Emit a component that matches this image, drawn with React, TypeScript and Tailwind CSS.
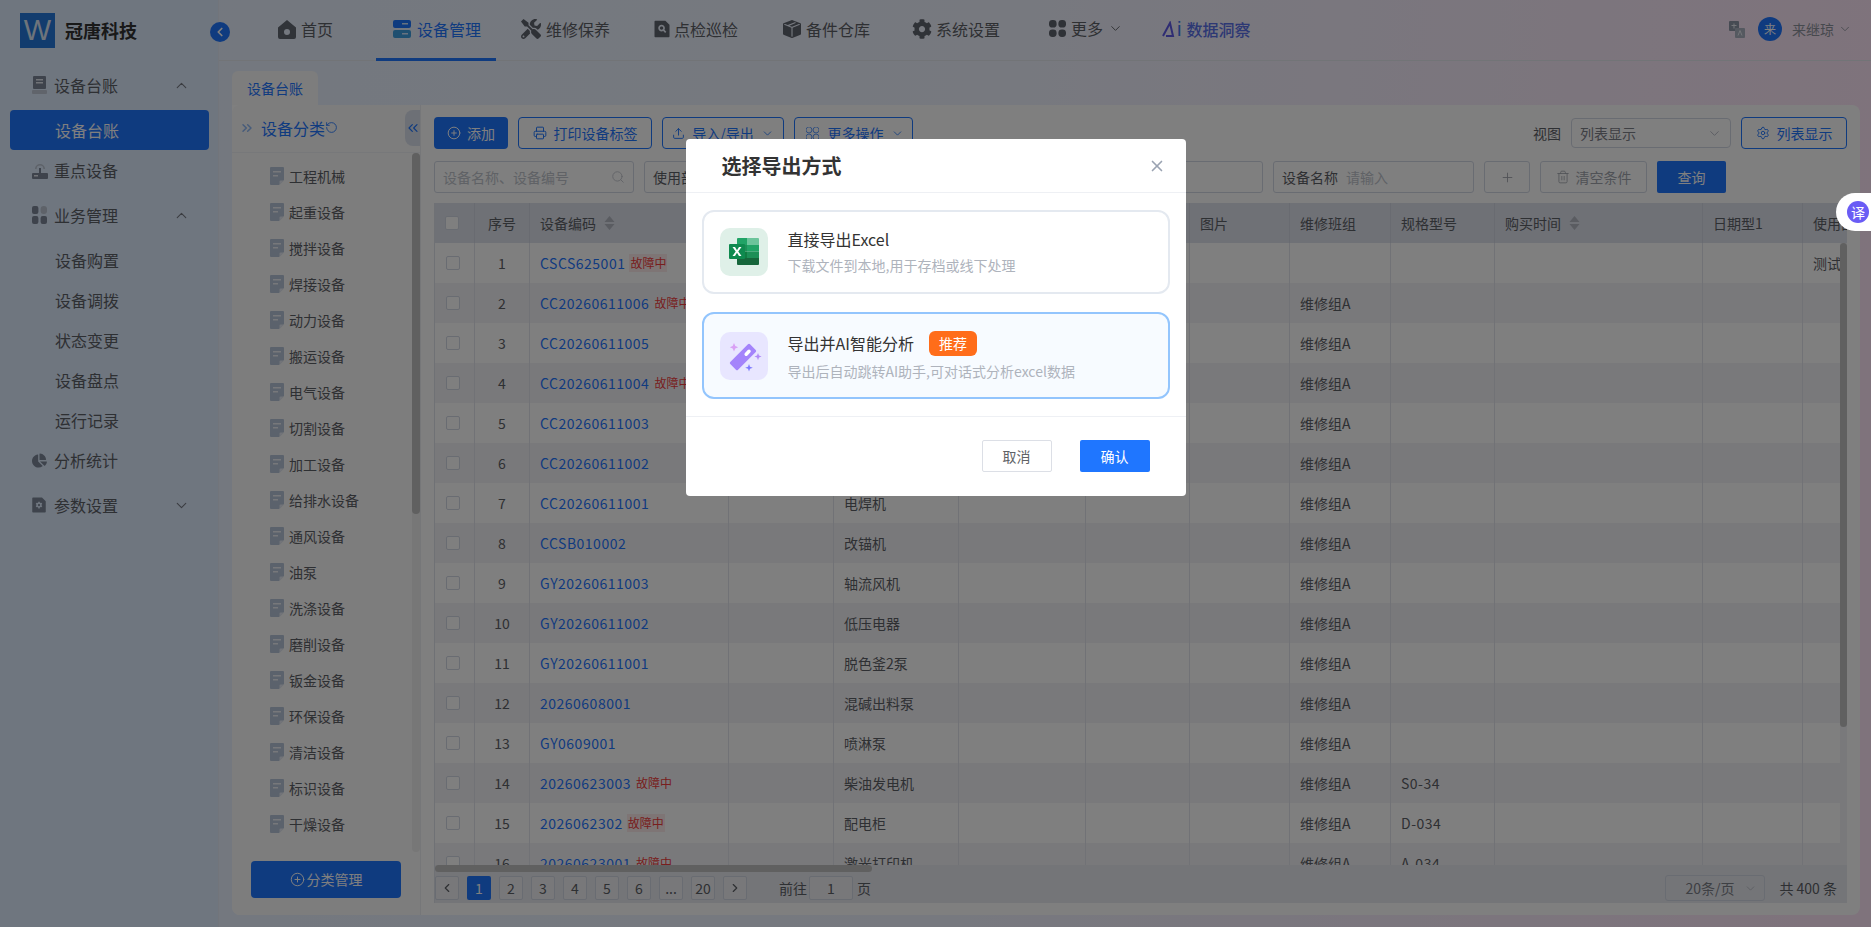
import { ChevronDown, ChevronLeft, ChevronRight, ChevronUp, ChevronsLeft, ChevronsRight, CirclePlus, Plus, Printer, RotateCw, Search, Settings, Trash2, Upload, X } from "lucide-react";
import { FaChartPie, FaCog, FaTools } from "react-icons/fa";
import { BsBoxSeamFill } from "react-icons/bs";
import { RiFileSearchFill, RiFileSettingsFill } from "react-icons/ri";

const navItems = [
  { label: "维修保养", icon: <FaTools className="size-[20px]" />, cls: "ml-[9px] pl-[16px] gap-[5px] w-[121px]" },
  { label: "点检巡检", icon: <RiFileSearchFill className="size-[20px]" />, cls: "ml-[12px] pl-[14px] gap-[2px] w-[118px]" },
  { label: "备件仓库", icon: <BsBoxSeamFill className="size-[18px]" />, cls: "ml-[11px] pl-[16px] gap-[5px] w-[119px]" },
  { label: "系统设置", icon: <FaCog className="size-[20px]" />, cls: "ml-[10px] pl-[16px] gap-[4px] w-[120px]" },
];

const categories = ["工程机械", "起重设备", "搅拌设备", "焊接设备", "动力设备", "搬运设备", "电气设备", "切割设备", "加工设备", "给排水设备", "通风设备", "油泵", "洗涤设备", "磨削设备", "钣金设备", "环保设备", "清洁设备", "标识设备", "干燥设备"];

const rows = [
  { code: "CSCS625001", fault: true, name: "", team: "", model: "", use: "测试" },
  { code: "CC20260611006", fault: true, name: "", team: "维修组A", model: "", use: "" },
  { code: "CC20260611005", fault: false, name: "", team: "维修组A", model: "", use: "" },
  { code: "CC20260611004", fault: true, name: "", team: "维修组A", model: "", use: "" },
  { code: "CC20260611003", fault: false, name: "", team: "维修组A", model: "", use: "" },
  { code: "CC20260611002", fault: false, name: "", team: "维修组A", model: "", use: "" },
  { code: "CC20260611001", fault: false, name: "电焊机", team: "维修组A", model: "", use: "" },
  { code: "CCSB010002", fault: false, name: "改锚机", team: "维修组A", model: "", use: "" },
  { code: "GY20260611003", fault: false, name: "轴流风机", team: "维修组A", model: "", use: "" },
  { code: "GY20260611002", fault: false, name: "低压电器", team: "维修组A", model: "", use: "" },
  { code: "GY20260611001", fault: false, name: "脱色釜2泵", team: "维修组A", model: "", use: "" },
  { code: "20260608001", fault: false, name: "混碱出料泵", team: "维修组A", model: "", use: "" },
  { code: "GY0609001", fault: false, name: "喷淋泵", team: "维修组A", model: "", use: "" },
  { code: "20260623003", fault: true, name: "柴油发电机", team: "维修组A", model: "S0-34", use: "" },
  { code: "2026062302", fault: true, name: "配电柜", team: "维修组A", model: "D-034", use: "" },
  { code: "20260623001", fault: true, name: "激光打印机", team: "维修组A", model: "A-034", use: "" },
];

const gridCols = "grid grid-cols-[40px_55px_199px_105px_125px_127px_104px_100px_101px_104px_208px_100px_1fr]";

const SortCaret = () => (
  <svg width="11" height="14" viewBox="0 0 11 14" className="ml-[8px] shrink-0 fill-[#b4b8c2]">
    <path d="M5.5 0 10.5 6H.5zM5.5 14 .5 8h10z" />
  </svg>
);

const DocIcon = () => (
  <svg width="14" height="18" viewBox="0 0 14 18" className="shrink-0">
    <path d="M1 0h12a1 1 0 0 1 1 1v12l-5 5H1a1 1 0 0 1-1-1V1a1 1 0 0 1 1-1z" fill="#b7c4d8" />
    <path d="M3 4h8v1.6H3zM3 8h5v1.6H3z" fill="#eef1f6" />
    <path d="M14 13.5 9.5 18v-3.5a1 1 0 0 1 1-1z" fill="#e4e9f2" />
  </svg>
);

const Petals = ({ cls }: { cls: string }) => (
  <svg width="17" height="17" viewBox="0 0 17 17" className={cls}>
    <rect x="0" y="0" width="7.6" height="7.6" rx="3.4" />
    <rect x="9.4" y="0" width="7.6" height="7.6" rx="3.4" />
    <rect x="0" y="9.4" width="7.6" height="7.6" rx="3.4" />
    <rect x="9.4" y="9.4" width="7.6" height="7.6" rx="3.4" />
  </svg>
);

const SideGroup = ({ icon, label, chevron }: { icon: React.ReactNode; label: string; chevron?: "up" | "down" }) => (
  <div className="flex h-[50px] items-center pl-[32px] pr-[28px] text-[16px] text-[#5d6066]">
    <span className="flex w-[22px] shrink-0 items-center">{icon}</span>
    <span>{label}</span>
    {chevron === "up" && <ChevronUp className="ml-auto size-[17px] text-[#777b84]" strokeWidth={1.6} />}
    {chevron === "down" && <ChevronDown className="ml-auto size-[17px] text-[#777b84]" strokeWidth={1.6} />}
  </div>
);

const SideSub = ({ label }: { label: string }) => (
  <div className="flex h-[40px] items-center pl-[55px] text-[16px] text-[#5d6066]">{label}</div>
);

const Sidebar = () => (
  <aside className="w-[219px] shrink-0 border-r border-[#e4ebf7] bg-[#deecff]">
    <div className="flex h-[60px] items-center pl-[20px]">
      <div className="flex size-[35px] items-center justify-center bg-[#2478dc] font-['Liberation_Sans',sans-serif] text-[29px] leading-none text-[#dce8f6]">W</div>
      <span className="ml-[10px] text-[18px] font-bold text-[#333]">冠唐科技</span>
    </div>
    <SideGroup
      label="设备台账"
      chevron="up"
      icon={
        <svg width="15" height="19" viewBox="0 0 15 19">
          <rect x="1" width="13" height="13" rx="1" fill="#7c8798" />
          <path d="M4 3h7v1.4H4zM4 6h7v1.4H4z" fill="#e3e8f0" />
          <rect y="14" width="15" height="4" rx="1" fill="#c1c9d6" />
        </svg>
      }
    />
    <div className="ml-[10px] mr-[9px] flex h-[40px] items-center rounded-[4px] bg-[#1f76ff] pl-[45px] text-[16px] text-white">设备台账</div>
    <div className="flex h-[40px] items-center pl-[32px] text-[16px] text-[#5d6066]">
      <span className="flex w-[22px] shrink-0 items-center">
        <svg width="16" height="19" viewBox="0 0 16 19">
          <path d="M3 8a5 5 0 0 1 10 0h-1.6a3.4 3.4 0 0 0-6.8 0z" fill="#bcc5d2" />
          <rect x="7" y="7" width="2" height="6" fill="#7c8798" />
          <rect y="12" width="16" height="6" rx="1" fill="#7c8798" />
          <rect x="2" y="14" width="4" height="1.5" fill="#e3e8f0" />
        </svg>
      </span>
      重点设备
    </div>
    <SideGroup
      label="业务管理"
      chevron="up"
      icon={
        <svg width="15" height="18" viewBox="0 0 15 18">
          <rect width="6.4" height="8" rx="2" fill="#7c8798" />
          <rect x="8.6" width="6.4" height="8" rx="3" fill="#bcc5d2" />
          <rect y="10" width="6.4" height="8" rx="2" fill="#7c8798" />
          <rect x="8.6" y="10" width="6.4" height="8" rx="2" fill="#7c8798" />
        </svg>
      }
    />
    {["设备购置", "设备调拨", "状态变更", "设备盘点", "运行记录"].map((l) => (
      <SideSub key={l} label={l} />
    ))}
    <div className="flex h-[40px] items-center pl-[32px] text-[16px] text-[#5d6066]">
      <span className="flex w-[22px] shrink-0 items-center">
        <FaChartPie className="size-[15px] text-[#7c8798]" />
      </span>
      分析统计
    </div>
    <SideGroup label="参数设置" chevron="down" icon={<RiFileSettingsFill className="size-[18px] -ml-[2px] text-[#7c8798]" />} />
  </aside>
);

const TopBar = () => (
  <header className="relative flex h-[61px] shrink-0 items-start border-b border-[#e4e8ee] text-[16px] text-[#5d6066]">
    <div className="absolute -left-[9px] top-[22px] z-10 flex size-[20px] items-center justify-center rounded-full bg-[#1f76ff] text-white">
      <ChevronLeft className="size-[14px]" strokeWidth={3} />
    </div>
    <div className="ml-[59px] flex h-[60px] w-[88px] items-center gap-[5px] pb-[2px]">
      <svg width="18" height="19" viewBox="0 0 18 19" className="shrink-0 fill-[#626873]">
        <path fillRule="evenodd" d="M9 0l9 7.5V17a2 2 0 0 1-2 2H2a2 2 0 0 1-2-2V7.5zM9 9a3 3 0 1 0 0 6 3 3 0 0 0 0-6z" />
      </svg>
      首页
    </div>
    <div className="ml-[10px] flex h-[61px] w-[120px] items-center gap-[6px] border-b-[3px] border-[#1f76ff] pl-[17px] text-[#1f76ff]">
      <svg width="18" height="18" viewBox="0 0 18 18" className="shrink-0">
        <rect width="18" height="8" rx="2" fill="#1f76ff" />
        <rect y="10" width="18" height="8" rx="2" fill="#3f9fe0" />
        <path d="M9 3h6v1.4H9zM9 13h6v1.4H9z" fill="#cfe4ff" />
      </svg>
      设备管理
    </div>
    {navItems.map((n) => (
      <div key={n.label} className={`flex h-[60px] items-center pb-[2px] ${n.cls}`}>
        <span className="flex shrink-0 text-[#5f646e]">{n.icon}</span>
        {n.label}
      </div>
    ))}
    <div className="ml-[17px] flex h-[60px] w-[105px] items-center pb-[4px] pl-[16px]">
      <Petals cls="mr-[5px] fill-[#5f646e]" />
      更多
      <ChevronDown className="ml-[5px] size-[15px]" strokeWidth={1.5} />
    </div>
    <div className="ml-[8px] flex h-[60px] items-center pb-[2px] pl-[16px] font-medium text-[#5a70e8]">
      <svg width="14" height="16" viewBox="0 0 14 16" className="mr-[1px] fill-none">
        <path d="M1 15 8 2l3 13H4" stroke="#5f5ae6" strokeWidth="2" />
      </svg>
      <span className="mr-[5px] font-['Liberation_Sans',sans-serif] text-[20px] leading-none text-[#3f78ee]">i</span>
      数据洞察
    </div>
    <div className="ml-auto flex h-[60px] items-center pb-[2px] pr-[19px] text-[14px] text-[#8d929c]">
      <svg width="16" height="17" viewBox="0 0 16 17" className="mr-[13px]">
        <rect width="10" height="10" rx="1" fill="#8d96a6" />
        <rect x="6" y="7" width="10" height="10" rx="1" fill="#aab2c0" />
        <path d="M2.5 4.5h5M5 2.5v5M9 14.5l2-5 2 5" stroke="#e8ecf2" strokeWidth="1" fill="none" />
      </svg>
      <span className="mr-[10px] flex size-[24px] items-center justify-center rounded-full bg-[#1f76ff] text-[12px] text-white">来</span>
      来继琼
      <ChevronDown className="ml-[4px] size-[14px]" strokeWidth={1.5} />
    </div>
  </header>
);

const CategoryPanel = () => (
  <div className="flex w-[189px] shrink-0 flex-col rounded-l-[8px] border-r border-[#eceef2] bg-[#fafafa]">
    <div className="relative flex h-[48px] shrink-0 items-center border-b border-[#eef0f4] pb-[2px] pl-[7px] text-[16px] text-[#1f76ff]">
      <ChevronsRight className="mr-[6px] size-[16px] text-[#8fb8f5]" strokeWidth={2.2} />
      设备分类
      <RotateCw className="size-[13px] -scale-x-100" strokeWidth={1.6} />
      <div className="absolute right-0 top-[5px] flex h-[36px] w-[15px] items-center justify-center rounded-l-[8px] bg-[#dbe1ec]">
        <ChevronsLeft className="size-[16px] shrink-0" strokeWidth={1.8} />
      </div>
    </div>
    <div className="flex min-h-0 flex-1 justify-between">
      <ul className="pl-[38px] pt-[5px] text-[14px] text-[#5d6066]">
        {categories.map((c) => (
          <li key={c} className="flex h-[36px] items-center gap-[5px]">
            <DocIcon />
            {c}
          </li>
        ))}
      </ul>
      <div className="h-[699px] w-[8px] rounded-[4px] bg-[#eeeeee]">
        <div className="h-[361px] rounded-[4px] bg-[#c0c0c0]" />
      </div>
    </div>
    <button className="mx-[19px] mb-[17px] flex h-[37px] shrink-0 items-center justify-center gap-[2px] rounded-[4px] bg-[#1f76ff] text-[14px] text-white">
      <CirclePlus className="size-[15px]" strokeWidth={1.6} />
      分类管理
    </button>
  </div>
);

const OutlineBtn = ({ children, cls }: { children: React.ReactNode; cls: string }) => (
  <button className={`flex h-[32px] items-center justify-center gap-[7px] rounded-[4px] border border-[#1f76ff] bg-white text-[14px] text-[#1f76ff] ${cls}`}>{children}</button>
);

const FilterBox = ({ label, placeholder, cls }: { label?: string; placeholder?: string; cls: string }) => (
  <div className={`flex h-[32px] items-center rounded-[3px] border border-[#d3d8e4] bg-white px-[8px] text-[14px] ${cls}`}>
    {label && <span className="mr-[8px] text-[#5d6066]">{label}</span>}
    <span className="text-[#c0c4cc]">{placeholder}</span>
  </div>
);

const Toolbar = () => (
  <>
    <div className="flex h-[32px] items-center">
      <button className="flex h-[32px] w-[74px] items-center justify-center gap-[6px] rounded-[4px] bg-[#1f76ff] text-[14px] text-white">
        <CirclePlus className="size-[14px]" strokeWidth={1.7} />
        添加
      </button>
      <OutlineBtn cls="ml-[10px] w-[134px]">
        <Printer className="size-[14px]" strokeWidth={1.7} />
        打印设备标签
      </OutlineBtn>
      <OutlineBtn cls="ml-[10px] w-[122px] gap-[4px]">
        <Upload className="size-[13px]" strokeWidth={1.7} />
        导入/导出
        <ChevronDown className="size-[13px]" strokeWidth={1.5} />
      </OutlineBtn>
      <OutlineBtn cls="ml-[10px] w-[119px] gap-[4px]">
        <Petals cls="fill-none stroke-[#1f76ff] scale-[.75]" />
        更多操作
        <ChevronDown className="size-[13px]" strokeWidth={1.5} />
      </OutlineBtn>
      <span className="ml-auto text-[14px] text-[#5d6066]">视图</span>
      <div className="ml-[10px] flex h-[30px] w-[160px] items-center justify-between rounded-[4px] border border-[#d3d8e4] bg-white px-[8px] text-[14px] text-[#7d8088]">
        列表显示
        <ChevronDown className="size-[15px] text-[#b4b8c2]" strokeWidth={1.5} />
      </div>
      <OutlineBtn cls="ml-[10px] w-[106px]">
        <Settings className="size-[14px]" strokeWidth={1.6} />
        列表显示
      </OutlineBtn>
    </div>
    <div className="mt-[12px] flex h-[32px] items-center">
      <div className="flex h-[32px] w-[200px] items-center justify-between rounded-[3px] border border-[#d3d8e4] bg-white px-[8px] text-[14px] text-[#c0c4cc]">
        设备名称、设备编号
        <Search className="size-[14px]" strokeWidth={1.5} />
      </div>
      <FilterBox label="使用部门" placeholder="请选择" cls="ml-[10px] w-[300px]" />
      <FilterBox label="设备类别" placeholder="请选择" cls="ml-[10px] w-[309px]" />
      <FilterBox label="设备名称" placeholder="请输入" cls="ml-[10px] w-[201px]" />
      <div className="ml-[10px] flex h-[32px] w-[46px] items-center justify-center rounded-[3px] border border-[#d3d8e4] bg-white text-[#a0a4ad]">
        <Plus className="size-[15px]" strokeWidth={1.4} />
      </div>
      <div className="ml-[10px] flex h-[32px] w-[107px] items-center justify-center gap-[6px] rounded-[3px] border border-[#d3d8e4] bg-white text-[14px] text-[#a0a4ad]">
        <Trash2 className="size-[14px]" strokeWidth={1.4} />
        清空条件
      </div>
      <button className="ml-[10px] flex h-[32px] w-[69px] items-center justify-center rounded-[2px] bg-[#1f76ff] text-[14px] text-white">查询</button>
    </div>
  </>
);

const headCell = "flex items-center border-r border-[#d2d7e2] px-[10px]";
const bodyCell = "flex items-center overflow-hidden whitespace-nowrap border-r border-[#e2e5ec] px-[10px]";

const Checkbox = () => <span className="size-[14px] shrink-0 rounded-[2px] border border-[#d3d8e4] bg-white" />;

const PagerBtn = ({ children, cls = "" }: { children: React.ReactNode; cls?: string }) => (
  <div className={`flex h-[24px] w-[24px] items-center justify-center rounded-[2px] border border-[#d3d8e4] bg-[#f0f1f5] ${cls}`}>{children}</div>
);

const DeviceTable = () => (
  <div className="mt-[10px] flex flex-col border-l border-[#dfe3ea] text-[14px] text-[#5d6066]">
    <div className={`${gridCols} h-[40px] bg-[#dee2ec]`}>
      <div className={headCell}>
        <Checkbox />
      </div>
      <div className={`${headCell} justify-center`}>序号</div>
      <div className={headCell}>
        设备编码
        <SortCaret />
      </div>
      <div className={headCell}>状态</div>
      <div className={headCell}>设备名称</div>
      <div className={headCell}>设备类别</div>
      <div className={headCell}>使用部门</div>
      <div className={headCell}>图片</div>
      <div className={headCell}>维修班组</div>
      <div className={headCell}>规格型号</div>
      <div className={headCell}>
        购买时间
        <SortCaret />
      </div>
      <div className={headCell}>日期型1</div>
      <div className="flex items-center overflow-hidden whitespace-nowrap pl-[10px]">使用部门</div>
    </div>
    <div className="flex h-[622px] overflow-hidden">
      <div className="min-w-0 flex-1 overflow-hidden">
        {rows.map((r, i) => (
          <div key={r.code} className={`${gridCols} h-[40px] ${i % 2 ? "bg-[#f3f3f7]" : "bg-white"}`}>
            <div className={`${bodyCell} pl-[11px]`}>
              <Checkbox />
            </div>
            <div className={`${bodyCell} justify-center`}>{i + 1}</div>
            <div className={bodyCell}>
              <span className="tracking-[0.5px] text-[#1f76ff]">{r.code}</span>
              {r.fault && <span className={`ml-[4px] px-[1px] text-[12px] text-[#f03c3c] ${i % 2 ? "" : "bg-[#fdeaea]"}`}>故障中</span>}
            </div>
            <div className={bodyCell} />
            <div className={bodyCell}>{r.name}</div>
            <div className={bodyCell} />
            <div className={bodyCell} />
            <div className={bodyCell} />
            <div className={bodyCell}>{r.team}</div>
            <div className={`${bodyCell} tracking-[0.5px]`}>{r.model}</div>
            <div className={bodyCell} />
            <div className={bodyCell} />
            <div className="flex items-center whitespace-nowrap pl-[10px]">{r.use}</div>
          </div>
        ))}
      </div>
      <div className="h-full w-[7px] shrink-0 bg-[#f3f3f7]">
        <div className="h-[484px] rounded-[4px] bg-[#c0c0c0]" />
      </div>
    </div>
    <div className="h-[38px] bg-[#e8eaf0]">
      <div className="h-[7px] w-[437px] rounded-[4px] bg-[#c0c0c0]" />
      <div className="mt-[4px] flex h-[24px] items-center pr-[10px]">
        <PagerBtn><ChevronLeft className="size-[14px]" /></PagerBtn>
        <div className="ml-[8px] flex h-[24px] w-[24px] items-center justify-center rounded-[2px] bg-[#1f76ff] text-white">1</div>
        {["2", "3", "4", "5", "6", "...", "20"].map((p) => (
          <PagerBtn key={p} cls="ml-[8px]">{p}</PagerBtn>
        ))}
        <PagerBtn cls="ml-[8px]"><ChevronRight className="size-[14px]" /></PagerBtn>
        <span className="ml-[32px]">前往</span>
        <div className="ml-[2px] flex h-[24px] w-[44px] items-center justify-center rounded-[2px] border border-[#d3d8e4] bg-[#f0f1f5]">1</div>
        <span className="ml-[4px]">页</span>
        <div className="ml-auto flex h-[26px] w-[100px] items-center justify-between rounded-[3px] border border-[#d3d8e4] bg-[#e8eaf0] pl-[19px] pr-[7px] text-[#7d8088]">
          20条/页
          <ChevronDown className="size-[13px] text-[#b4b8c2]" strokeWidth={1.5} />
        </div>
        <span className="ml-[14px]">共 400 条</span>
      </div>
    </div>
  </div>
);

const ExcelIcon = () => (
  <svg width="48" height="48" viewBox="0 0 48 48">
    <path d="M17 11a1 1 0 0 1 1-1h9v7H17z" fill="#21a366" />
    <path d="M27 10h11a1 1 0 0 1 1 1v6H27z" fill="#6cc49b" />
    <path d="M17 17h10v6.500H17z" fill="#1d8f57" />
    <path d="M27 17h12v6.500H27z" fill="#21a366" />
    <path d="M17 23.500h10V30H17z" fill="#107c41" />
    <path d="M27 23.500h12V30H27z" fill="#1d8f57" />
    <path d="M17 30h22v6a1 1 0 0 1-1 1H18a1 1 0 0 1-1-1z" fill="#16663b" />
    <rect x="9" y="16" width="16" height="15" rx="1" fill="#0f8a4f" />
    <path d="M12.500 19h2.500l2 3.300 2-3.300h2.500l-3.200 4.500 3.200 4.500H19l-2-3.300-2 3.300h-2.500l3.200-4.500z" fill="#fff" />
  </svg>
);

const WandIcon = () => (
  <svg width="48" height="48" viewBox="0 0 48 48">
    <defs>
      <linearGradient id="wand" x1="0" y1="1" x2="1" y2="0">
        <stop offset="0" stopColor="#7f7bff" />
        <stop offset="1" stopColor="#c08cf8" />
      </linearGradient>
    </defs>
    <g transform="rotate(45 23 25)">
      <rect x="17.500" y="11" width="11" height="28" rx="1.500" fill="#a484fb" />
      <rect x="21.500" y="15" width="3.500" height="7.500" rx="1.750" fill="#fff" />
    </g>
    <path d="M14 11l1.300 2.900 2.900 1.300-2.900 1.300L14 19.500l-1.300-3-2.900-1.300 2.900-1.300z" fill="#d9a0f5" />
    <path d="M38 21l1 2.600 2.600 1-2.600 1-1 2.600-1-2.600-2.600-1 2.600-1z" fill="#b28cf8" />
    <path d="M29 32l1 2.800 2.800 1-2.800 1-1 2.800-1-2.800-2.800-1 2.800-1z" fill="#7f7bff" />
  </svg>
);

const ExportDialog = () => (
  <div className="fixed inset-0 z-20 flex items-start justify-center bg-black/50">
    <div className="mt-[139px] w-[500px] rounded-[4px] bg-white">
      <div className="flex h-[54px] items-center justify-between border-b border-[#eef0f4] pl-[36px] pr-[20px]">
        <span className="text-[20px] font-bold text-[#333]">选择导出方式</span>
        <X className="size-[18px] text-[#9aa3b2]" strokeWidth={2.2} />
      </div>
      <div className="flex flex-col gap-[18px] px-[16px] py-[17px]">
        <div className="flex h-[84px] items-center rounded-[12px] border-2 border-[#e4e9f0] pl-[16px]">
          <div className="size-[48px] rounded-[10px] bg-[#dff0e8]">
            <ExcelIcon />
          </div>
          <div className="ml-[20px] -mt-[2px]">
            <div className="text-[16px] leading-[22px] text-[#333]">直接导出Excel</div>
            <div className="mt-[5px] text-[14px] leading-[20px] text-[#aeb3bc]">下载文件到本地,用于存档或线下处理</div>
          </div>
        </div>
        <div className="flex h-[87px] items-center rounded-[12px] border-2 border-[#93c5fd] bg-[#f7fbff] pl-[16px]">
          <div className="size-[48px] rounded-[10px] bg-[#e8e6ff]">
            <WandIcon />
          </div>
          <div className="ml-[20px]">
            <div className="flex h-[25px] items-center text-[16px] text-[#333]">
              导出并AI智能分析
              <span className="ml-[15px] flex h-[25px] w-[48px] items-center justify-center rounded-[6px] bg-[#ff6d1a] text-[14px] text-white">推荐</span>
            </div>
            <div className="mt-[5px] text-[14px] leading-[20px] text-[#aeb3bc]">导出后自动跳转AI助手,可对话式分析excel数据</div>
          </div>
        </div>
      </div>
      <div className="flex justify-end gap-[28px] border-t border-[#eef0f4] pb-[24px] pr-[36px] pt-[23px]">
        <button className="h-[32px] w-[70px] rounded-[2px] border border-[#dcdfe6] bg-white text-[14px] text-[#606266]">取消</button>
        <button className="h-[32px] w-[70px] rounded-[2px] bg-[#1f76ff] text-[14px] text-white">确认</button>
      </div>
    </div>
  </div>
);

const TranslateFloat = () => (
  <div className="fixed right-0 top-[193px] z-30 flex h-[38px] w-[35px] items-center rounded-l-[19px] bg-white pl-[11px]">
    <div className="flex size-[22px] items-center justify-center rounded-full bg-[#6a5cf5] text-[14px] text-white">译</div>
  </div>
);

export default function App() {
  return (
    <div className="flex h-[927px] w-[1871px] overflow-hidden bg-[linear-gradient(95deg,#e6f0ff_0%,#eef3ff_50%,#ffe6f8_100%)] font-['Noto_Sans_CJK_SC','Noto_Sans',sans-serif]">
      <Sidebar />
      <main className="flex min-w-0 flex-1 flex-col">
        <TopBar />
        <div className="pl-[13px] pr-[11px] pt-[10px]">
          <div className="flex h-[34px] w-[86px] items-center justify-center rounded-t-[6px] bg-[#fafafa] text-[14px] text-[#1f76ff]">设备台账</div>
          <div className="flex h-[810px] rounded-b-[8px] rounded-tr-[8px] bg-white">
            <CategoryPanel />
            <div className="min-w-0 flex-1 pl-[13px] pr-[13px] pt-[12px]">
              <Toolbar />
              <DeviceTable />
            </div>
          </div>
        </div>
      </main>
      <ExportDialog />
      <TranslateFloat />
    </div>
  );
}
